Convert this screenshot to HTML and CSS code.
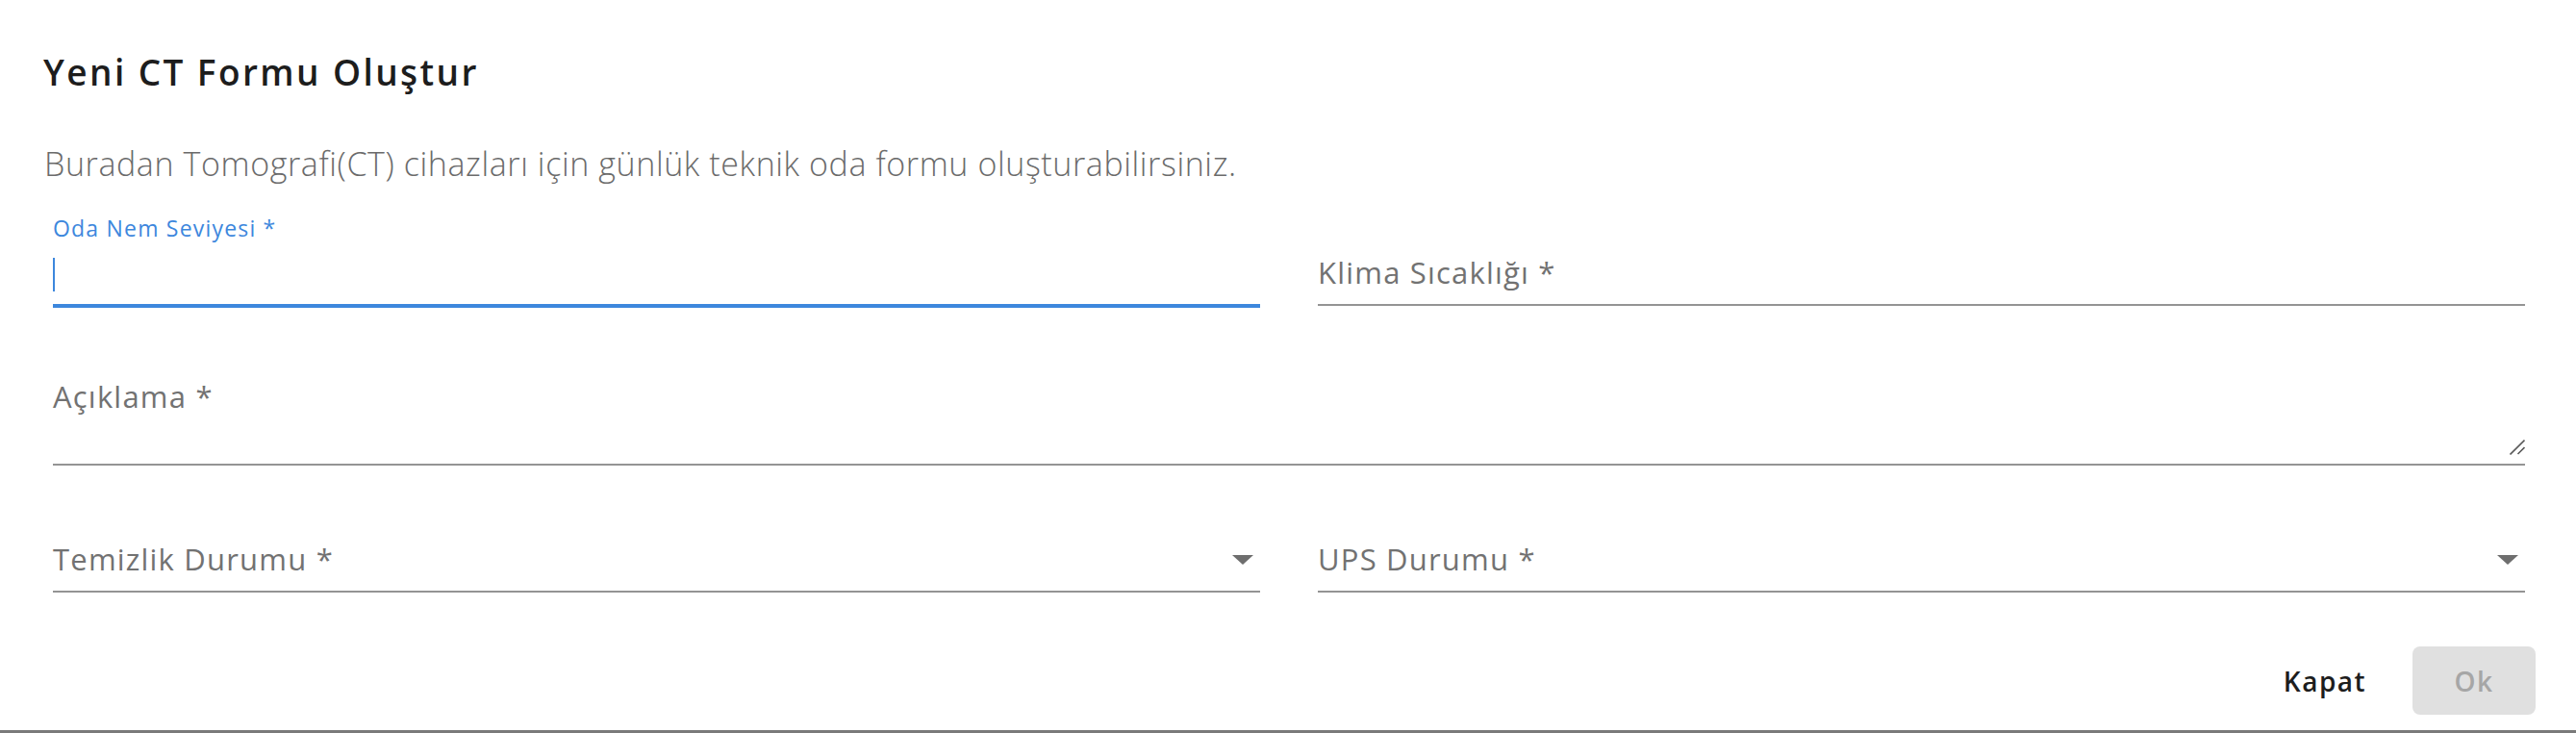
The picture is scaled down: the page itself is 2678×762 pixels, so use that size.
FILE: index.html
```html
<!DOCTYPE html>
<html lang="tr">
<head>
<meta charset="utf-8">
<title>Yeni CT Formu Oluştur</title>
<link rel="stylesheet" href="styles.css">
</head>
<body>
<div class="dialog">
  <h2 class="title">Yeni CT Formu Oluştur</h2>
  <p class="desc">Buradan Tomografi(CT) cihazları için günlük teknik oda formu oluşturabilirsiniz.</p>
  <div class="form">
    <div class="field focused">
      <label class="label-small">Oda Nem Seviyesi *</label>
      <span class="caret"></span>
    </div>
    <div class="field single">
      <label class="label">Klima Sıcaklığı *</label>
    </div>
    <div class="field multi span2">
      <label class="label">Açıklama *</label>
      <svg class="resize" width="16" height="17" viewBox="0 0 16 17"><path d="M0.5 16.5 L15.5 1.5 M8.5 16 L15.5 9" stroke="#5a5a5a" stroke-width="1.6" fill="none"/></svg>
    </div>
    <div class="field select">
      <label class="label">Temizlik Durumu *</label>
      <span class="arrow"></span>
    </div>
    <div class="field select">
      <label class="label">UPS Durumu *</label>
      <span class="arrow"></span>
    </div>
  </div>
  <div class="actions">
    <button class="btn btn-text">Kapat</button>
    <button class="btn btn-disabled" disabled>Ok</button>
  </div>
</div>
</body>
</html>
```
FILE: styles.css
```css
html, body {
  margin: 0;
  padding: 0;
  background: #ffffff;
}
body {
  width: 2678px;
  height: 762px;
  overflow: hidden;
  font-family: "Open Sans", "Liberation Sans", sans-serif;
}
.dialog {
  box-sizing: border-box;
  height: 762px;
  padding-top: 57px;
  border-bottom: 3px solid #7a7a7a;
  display: flex;
  flex-direction: column;
}
.title {
  margin: 0 0 0 45px;
  font-size: 37px;
  line-height: 36px;
  font-weight: 600;
  letter-spacing: 2.4px;
  color: #1d1d1d;
}
.desc {
  margin: 60px 0 0 46px;
  font-size: 34px;
  line-height: 34px;
  font-weight: 300;
  letter-spacing: 0.6px;
  color: #6b6b6b;
}
.form {
  margin: 29px 53px 0 55px;
  display: grid;
  grid-template-columns: 1fr 1fr;
  column-gap: 60px;
  align-items: start;
}
.field {
  box-sizing: border-box;
  height: 102px;
  border-bottom: 2px solid #949494;
  position: relative;
}
.span2 {
  grid-column: 1 / span 2;
}
.focused {
  height: 104px;
  margin-bottom: -2px;
  border-bottom: 4px solid #3d87dd;
  padding-top: 10px;
  display: flex;
  flex-direction: column;
}
.label-small {
  font-size: 23px;
  line-height: 23px;
  letter-spacing: 1.2px;
  color: #3d87dd;
}
.caret {
  display: block;
  width: 2px;
  height: 35px;
  margin-top: 19px;
  background: #3d87dd;
}
.label {
  font-size: 31px;
  line-height: 31px;
  letter-spacing: 1.2px;
  color: #727272;
}
.single {
  display: flex;
  align-items: flex-end;
  padding-bottom: 17px;
}
.multi {
  margin-top: 62px;
  height: 104px;
  padding-top: 17px;
}
.resize {
  position: absolute;
  right: 0;
  bottom: 9px;
}
.select {
  margin-top: 30px;
  display: flex;
  align-items: center;
  justify-content: space-between;
  padding-top: 52px;
  padding-bottom: 17px;
}
.arrow {
  width: 0;
  height: 0;
  margin-right: 7px;
  border-left: 11px solid transparent;
  border-right: 11px solid transparent;
  border-top: 10px solid #6e6e6e;
}
.actions {
  margin-top: 56px;
  padding-right: 42px;
  display: flex;
  justify-content: flex-end;
  gap: 27px;
}
.btn {
  height: 71px;
  min-width: 128px;
  padding: 0 16px;
  border: none;
  border-radius: 8px;
  font-family: "Open Sans", "Liberation Sans", sans-serif;
  font-size: 28px;
  line-height: 28px;
  font-weight: 600;
  letter-spacing: 1.5px;
  display: flex;
  align-items: center;
  justify-content: center;
}
.btn-text {
  background: transparent;
  color: #1d1d1d;
}
.btn-disabled {
  background: #e0e0e0;
  color: #a6a6a6;
}
```
